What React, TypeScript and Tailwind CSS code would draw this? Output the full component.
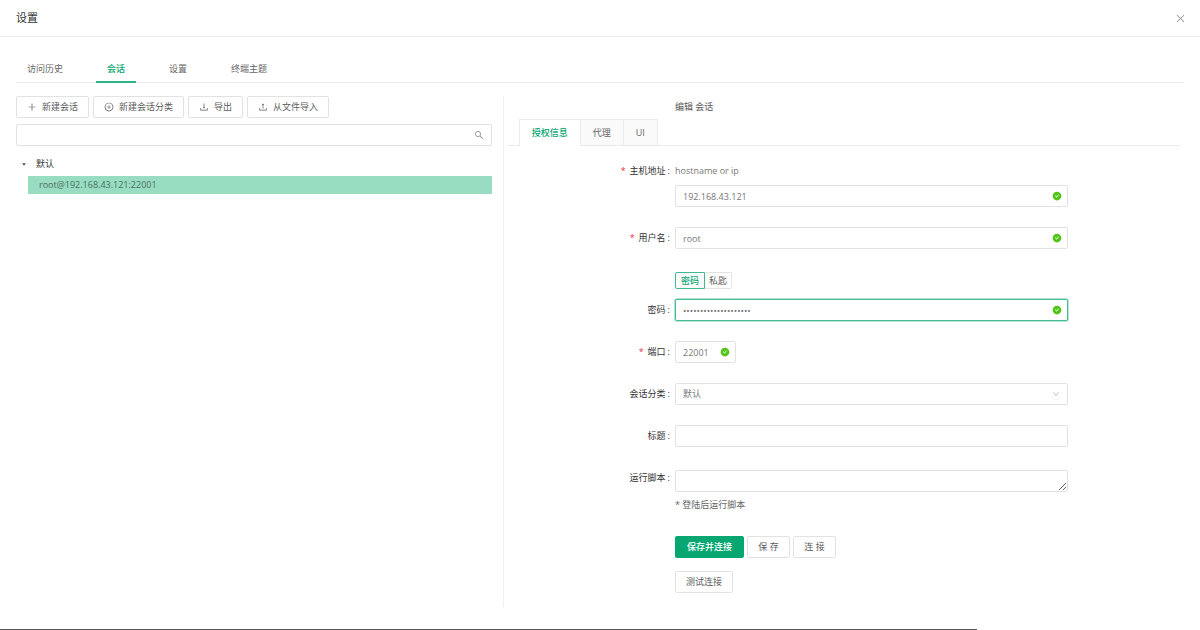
import { useState } from "react";
import type { ReactNode } from "react";
import {
  AiFillCheckCircle,
  AiOutlineClose,
  AiOutlineDown,
  AiOutlineDownload,
  AiOutlinePlus,
  AiOutlinePlusCircle,
  AiOutlineSearch,
  AiOutlineUpload,
} from "react-icons/ai";
import clsx from "clsx";

const mainTabs = ["访问历史", "会话", "设置", "终端主题"];
const formTabs = ["授权信息", "代理", "UI"];
const authTypes = ["密码", "私匙"];

const toolbar = [
  { label: "新建会话", icon: AiOutlinePlus },
  { label: "新建会话分类", icon: AiOutlinePlusCircle },
  { label: "导出", icon: AiOutlineDownload },
  { label: "从文件导入", icon: AiOutlineUpload },
];

const boxClass = "block h-[22px] w-full rounded-xs border bg-white text-[#777] outline-none";

const controlClass = clsx(boxClass, "border-[#e2e2e2] px-[7px]");

const buttonClass =
  "flex h-[22px] items-center justify-center rounded-xs border border-[#e2e2e2] bg-white px-[10px] whitespace-nowrap text-[#5c5c5c]";

type FieldProps = {
  label?: string;
  htmlFor?: string;
  required?: boolean;
  labelClass?: string;
  className?: string;
  children: ReactNode;
};

const Field = ({ label, htmlFor, required, labelClass, className, children }: FieldProps) => (
  <div className={clsx("flex", className ?? "mb-5")}>
    <div className={clsx("flex h-[22px] w-1/4 items-center justify-end pr-[5px]", labelClass)}>
      {label && (
        <label htmlFor={htmlFor} className="text-[#333]">
          {required && <span className="mr-1 text-[#e5353e]">*</span>}
          {label}
          <span className="ml-[2px]">:</span>
        </label>
      )}
    </div>
    <div className="w-7/12">{children}</div>
  </div>
);

const ValidInput = ({ id, type = "text", value, focused }: { id: string; type?: string; value: string; focused?: boolean }) => (
  <div className="relative">
    <input
      id={id}
      type={type}
      defaultValue={value}
      className={clsx(
        boxClass,
        "pr-6 pl-[7px]",
        focused ? "border-[#45bd95] ring-1 ring-[#08a772]/30" : "border-[#e2e2e2]"
      )}
    />
    <AiFillCheckCircle className="absolute top-[6px] right-[6px] size-[10px] text-[#52c41a]" />
  </div>
);

const SessionList = () => (
  <section className="w-5/12 pr-[11px]">
    <div className="mb-[6px] flex gap-1">
      {toolbar.map(({ label, icon: Icon }) => (
        <button key={label} type="button" className={clsx(buttonClass, "gap-[5px]")}>
          <Icon className="size-[10px]" />
          {label}
        </button>
      ))}
    </div>
    <div className="relative">
      <input type="search" aria-label="会话" className={clsx(boxClass, "border-[#e2e2e2] pr-6 pl-[7px]")} />
      <AiOutlineSearch className="absolute top-[6px] right-2 size-[10px] text-[#888]" />
    </div>
    <ul className="mt-[7px] text-[#333]">
      <li>
        <button type="button" className="mb-px flex h-[22px] items-center">
          <svg viewBox="0 0 6 4" className="mr-[10px] ml-[6px] h-[3px] w-1 fill-[#555]">
            <path d="M0 0h6L3 4z" />
          </svg>
          默认
        </button>
        <ul className="pl-3">
          <li>
            <button type="button" className="h-[18px] w-full bg-[#98dcc1] pl-[11px] text-left text-[#4d6f63]">
              root@192.168.43.121:22001
            </button>
          </li>
        </ul>
      </li>
    </ul>
  </section>
);

const SessionForm = () => {
  const [tab, setTab] = useState(formTabs[0]);
  const [auth, setAuth] = useState(authTypes[0]);

  return (
    <form className="w-7/12 border-l border-[#efefef] pr-1 pb-[14px] pl-[3px]" onSubmit={(e) => e.preventDefault()}>
      <h2 className="ml-[25%] h-[23px] leading-[21px] text-[#555]">编辑 会话</h2>
      <div className="mb-[14px] flex border-b border-[#ebebeb] pl-3">
        {formTabs.map((name) => (
          <button
            key={name}
            type="button"
            onClick={() => setTab(name)}
            className={clsx(
              "-mb-px h-[27px] border-t border-r border-[#ebebeb] px-3 first:border-l",
              name === tab ? "bg-white font-medium text-[#08a772]" : "border-b bg-[#fafafa] text-[#666]"
            )}
          >
            {name}
          </button>
        ))}
      </div>

      <Field label="主机地址" htmlFor="host" required>
        <p className="h-[25px] leading-[22px] text-[#777]">hostname or ip</p>
        <ValidInput id="host" value="192.168.43.121" />
      </Field>
      <Field label="用户名" htmlFor="username" required>
        <ValidInput id="username" value="root" />
      </Field>
      <Field label="密码" htmlFor="password" labelClass="mt-[30px]">
        <div className="mt-[3px] mb-[10px] flex">
          {authTypes.map((name) => (
            <button
              key={name}
              type="button"
              onClick={() => setAuth(name)}
              className={clsx(
                "flex h-[17px] items-center border first:rounded-l-xs last:rounded-r-xs",
                name === auth
                  ? "border-[#3dba92] px-[5px] font-medium text-[#08a772]"
                  : "border-l-0 border-[#e3e3e3] px-1 text-[#666]"
              )}
            >
              {name}
            </button>
          ))}
        </div>
        <ValidInput id="password" type="password" value="01234567890123456789" focused />
      </Field>
      <Field label="端口" htmlFor="port" required>
        <div className="w-[61px]">
          <ValidInput id="port" value="22001" />
        </div>
      </Field>
      <Field label="会话分类" htmlFor="category">
        <div className="relative">
          <select id="category" className={clsx(controlClass, "appearance-none")}>
            <option>默认</option>
          </select>
          <AiOutlineDown className="pointer-events-none absolute top-[7px] right-2 size-2 text-[#bbb]" />
        </div>
      </Field>
      <Field label="标题" htmlFor="title">
        <input id="title" type="text" className={controlClass} />
      </Field>
      <Field label="运行脚本" htmlFor="script">
        <textarea id="script" rows={1} className={clsx(controlClass, "mt-[3px] resize-y")} />
        <p className="mt-[2px] leading-[22px] text-[#666]">* 登陆后运行脚本</p>
      </Field>
      <Field className="mb-[13px]">
        <div className="flex gap-[3px]">
          <button
            type="submit"
            className="flex h-[22px] items-center rounded-xs bg-[#08a772] px-3 font-medium whitespace-nowrap text-white"
          >
            保存并连接
          </button>
          <button type="button" className={clsx(buttonClass, "w-[43px]")}>保 存</button>
          <button type="button" className={clsx(buttonClass, "w-[43px]")}>连 接</button>
        </div>
      </Field>
      <Field className="mb-0">
        <button type="button" className={buttonClass}>测试连接</button>
      </Field>
    </form>
  );
};

export default function App() {
  const [tab, setTab] = useState("会话");

  return (
    <div className="flex min-h-screen flex-col bg-white font-['Open_Sans','Noto_Sans_CJK_SC',sans-serif] text-[9px]">
      <header className="flex h-[37px] items-center justify-between border-b border-[#ededed] pt-px pr-[14px] pl-4">
        <h1 className="text-[11px] text-[#333]">设置</h1>
        <button type="button" aria-label="关闭" className="text-[#999]">
          <AiOutlineClose className="size-[11px]" />
        </button>
      </header>
      <main className="px-4 pt-[19px]">
        <nav className="mb-[13px] flex gap-[22px] border-b border-[#efefef]">
          {mainTabs.map((name) => (
            <button
              key={name}
              type="button"
              onClick={() => setTab(name)}
              className={clsx(
                "-mb-px h-[27px] border-b-2 px-[11px]",
                name === tab ? "border-[#2fb48a] font-medium text-[#08a772]" : "border-transparent text-[#666]"
              )}
            >
              {name}
            </button>
          ))}
        </nav>
        <div className="flex items-stretch">
          <SessionList />
          <SessionForm />
        </div>
      </main>
      <div className="mt-auto h-px w-[81.4%] bg-[#555]" />
    </div>
  );
}
